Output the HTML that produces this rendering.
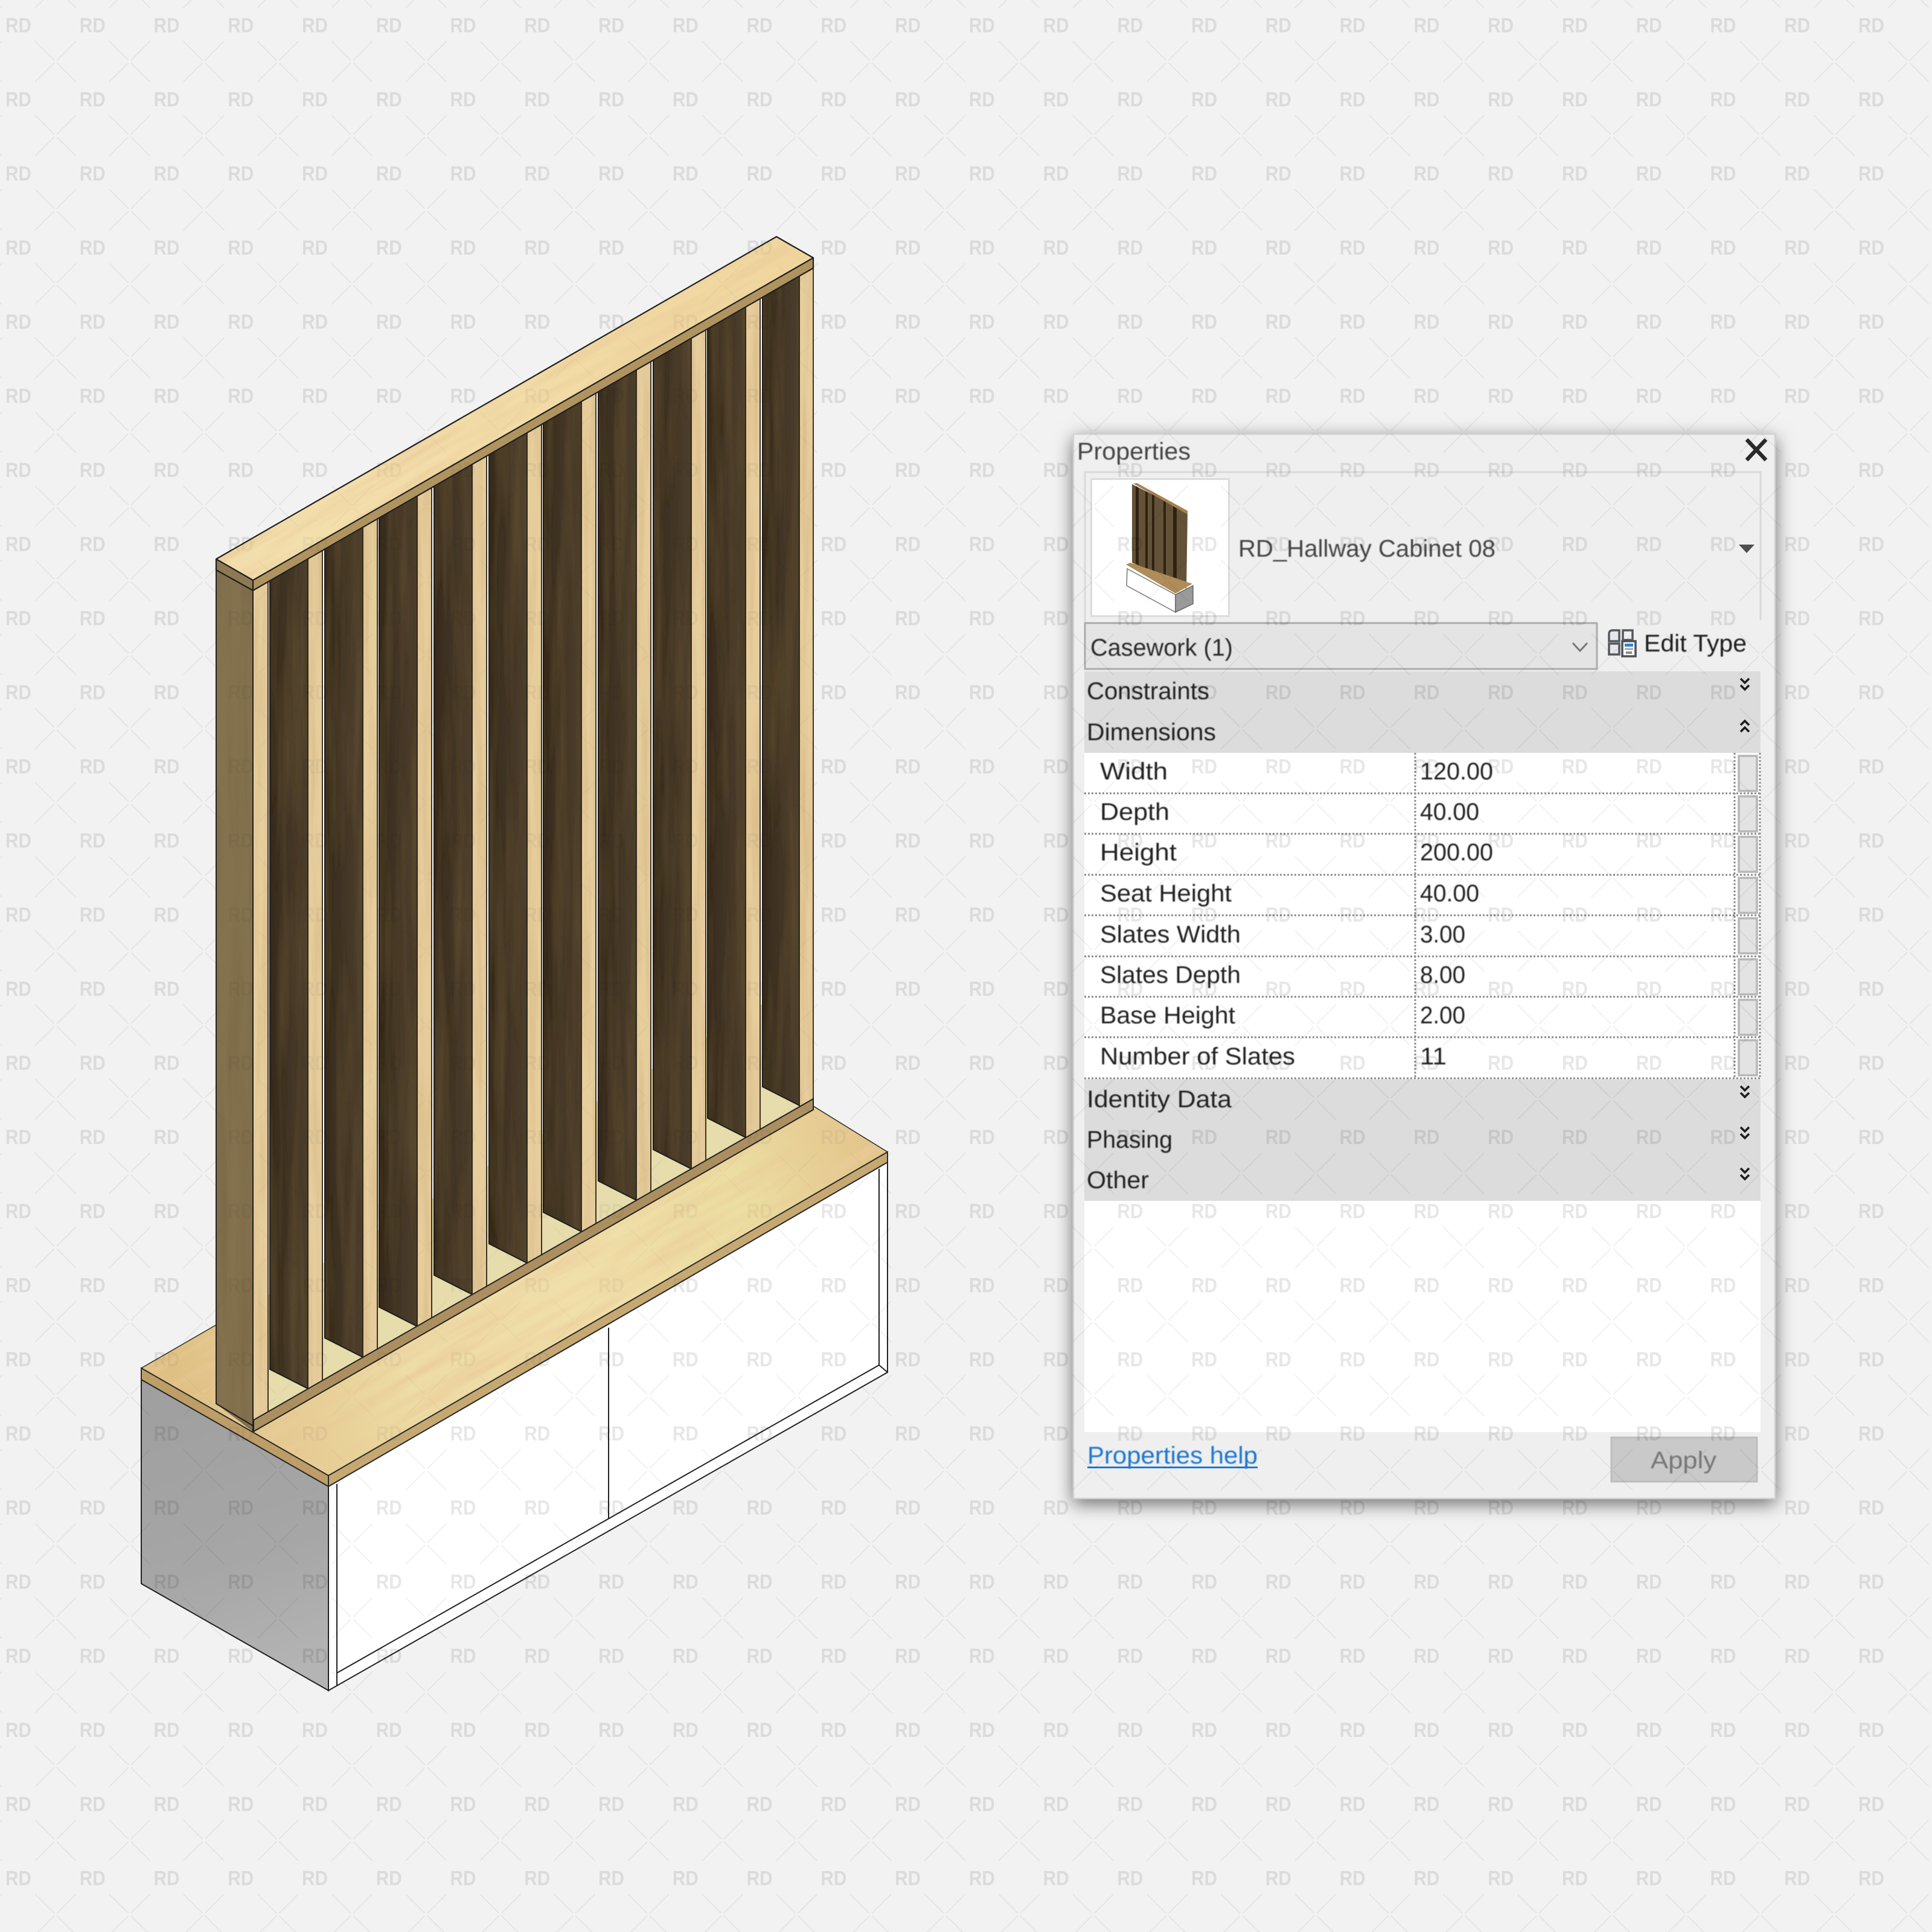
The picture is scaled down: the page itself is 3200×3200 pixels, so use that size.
<!DOCTYPE html>
<html><head><meta charset="utf-8"><title>Properties</title>
<style>html,body{margin:0;padding:0;background:#f2f2f2}svg{display:block}text{font-family:"Liberation Sans",sans-serif}</style></head>
<body>
<svg xmlns="http://www.w3.org/2000/svg" width="3200" height="3200" viewBox="0 0 3200 3200">
<defs>
<pattern id="wm" patternUnits="userSpaceOnUse" x="5" y="25" width="122.76" height="122.76">
  <text x="4" y="28.5" font-size="34" font-weight="700" textLength="43" lengthAdjust="spacingAndGlyphs" fill="#000" fill-opacity=".095" style="font-family:'Liberation Sans',sans-serif">RD</text>
  <path d="M53 43L85 75M89 79L121 111M121 43L89 75M85 79L53 111" stroke="#000" stroke-opacity=".065" stroke-width="1.6" fill="none"/>
</pattern>
<clipPath id="woodc">
  <polygon points="234,2266 357,2195 1347,1832 1470,1908 1470,1925 544,2462 234,2285"/>
  <polygon points="358,926 1286,392 1347,427 1347,1838 420,2371 358,2325"/>
</clipPath>
<clipPath id="panelc"><rect x="1777" y="718" width="1164" height="1766"/></clipPath>
<filter id="gh" x="0" y="0" width="1" height="1">
  <feTurbulence type="fractalNoise" baseFrequency="0.005 0.06" numOctaves="3" seed="4"/>
  <feColorMatrix values="0 0 0 0 .82  0 0 0 0 .6  0 0 0 0 .32  1.6 0 0 0 -.6"/>
  <feComposite in2="SourceAlpha" operator="in" result="g"/>
  <feMerge><feMergeNode in="SourceGraphic"/><feMergeNode in="g"/></feMerge>
</filter>
<filter id="gv" x="0" y="0" width="1" height="1">
  <feTurbulence type="fractalNoise" baseFrequency="0.05 0.003" numOctaves="3" seed="9"/>
  <feColorMatrix values="0 0 0 0 .15  0 0 0 0 .1  0 0 0 0 .04  .9 0 0 0 -.35"/>
  <feComposite in2="SourceAlpha" operator="in" result="g"/>
  <feMerge><feMergeNode in="SourceGraphic"/><feMergeNode in="g"/></feMerge>
</filter>
<filter id="gl" x="0" y="0" width="1" height="1">
  <feTurbulence type="fractalNoise" baseFrequency="0.08 0.004" numOctaves="3" seed="21"/>
  <feColorMatrix values="0 0 0 0 .62  0 0 0 0 .42  0 0 0 0 .18  1.1 0 0 0 -.42"/>
  <feComposite in2="SourceAlpha" operator="in" result="g"/>
  <feMerge><feMergeNode in="SourceGraphic"/><feMergeNode in="g"/></feMerge>
</filter>
<filter id="sh" x="-8%" y="-6%" width="116%" height="112%">
  <feDropShadow dx="0" dy="8" stdDeviation="15" flood-color="#000" flood-opacity=".55"/>
</filter>
<filter id="soft" x="-2%" y="-20%" width="104%" height="140%"><feGaussianBlur stdDeviation=".7"/></filter>
<linearGradient id="seat" gradientUnits="userSpaceOnUse" x1="300" y1="2300" x2="1450" y2="1900">
  <stop offset="0" stop-color="#dfc084"/><stop offset=".3" stop-color="#eedca6"/><stop offset=".55" stop-color="#f1dfaa"/><stop offset=".8" stop-color="#ecdea2"/><stop offset="1" stop-color="#e2c48a"/>
</linearGradient>
<linearGradient id="plank" gradientUnits="userSpaceOnUse" x1="358" y1="930" x2="1340" y2="420">
  <stop offset="0" stop-color="#f3e0ae"/><stop offset=".5" stop-color="#f3dca8"/><stop offset="1" stop-color="#f0d69e"/>
</linearGradient>
<linearGradient id="gray" gradientUnits="userSpaceOnUse" x1="234" y1="2300" x2="400" y2="2800">
  <stop offset="0" stop-color="#9f9f9f"/><stop offset=".6" stop-color="#a6a6a6"/><stop offset="1" stop-color="#b4b4b4"/>
</linearGradient>
<linearGradient id="dk" x1="0" y1="0" x2="1" y2="0">
  <stop offset="0" stop-color="#362a1c"/><stop offset=".5" stop-color="#423526"/><stop offset="1" stop-color="#4c3e2c"/>
</linearGradient>
</defs>

<rect width="3200" height="3200" fill="#f2f2f2"/>

<!-- Cabinet -->
<polygon points="234,2285 544,2462 544,2800 234,2623" fill="url(#gray)" stroke="#222" stroke-width="2"/>
<polygon points="544,2462 1470,1925 1470,2273 544,2800" fill="#fff" stroke="#222" stroke-width="2"/>
<path d="M558 2458V2771L1456 2261V1936M558 2771V2792M1456 2261L1470 2273M1008 2199V2515" fill="none" stroke="#222" stroke-width="2"/>

<rect width="3200" height="3200" fill="url(#wm)"/>

<!-- Seat -->
<g transform="rotate(-29.8 850 2100)"><g filter="url(#gh)"><g transform="rotate(29.8 850 2100)">
<polygon points="234,2266 357,2195 1347,1832 1470,1908 544,2444" fill="url(#seat)"/>
</g></g></g>
<polygon points="234,2266 357,2195 1347,1832 1470,1908 544,2444" fill="none" stroke="#2a2a2a" stroke-width="1.5"/>
<polygon points="234,2266 544,2444 544,2462 234,2285" fill="#bd9e68" stroke="#2a2a2a" stroke-width="2"/>
<polygon points="544,2444 1470,1908 1470,1925 544,2462" fill="#c6a972" stroke="#2a2a2a" stroke-width="2"/>

<!-- behind slats -->
<polygon points="444,964 1347,444 1347,1667 444,2146" fill="#fff"/>
<polygon points="444,2146 1347,1613 1347,1820 444,2338" fill="#e6dcac"/>

<!-- dark faces -->
<g filter="url(#gv)">
<polygon points="447,962 510,926 510,2300 447,2268" fill="url(#dk)"/>
<polygon points="538,910 601,873 601,2248 538,2216" fill="url(#dk)"/>
<polygon points="628,858 691,822 691,2197 628,2165" fill="url(#dk)"/>
<polygon points="719,805 782,769 782,2144 719,2112" fill="url(#dk)"/>
<polygon points="810,753 873,717 873,2092 810,2060" fill="url(#dk)"/>
<polygon points="900,701 963,665 963,2040 900,2008" fill="url(#dk)"/>
<polygon points="991,649 1054,613 1054,1988 991,1956" fill="url(#dk)"/>
<polygon points="1082,597 1145,560 1145,1936 1082,1904" fill="url(#dk)"/>
<polygon points="1172,545 1235,508 1235,1884 1172,1852" fill="url(#dk)"/>
<polygon points="1263,492 1326,456 1326,1832 1263,1800" fill="url(#dk)"/>
</g>
<g fill="none" stroke="#1c1c1c" stroke-width="2">
<path d="M447 962V2268L510 2300"/><path d="M538 910V2216L601 2248"/><path d="M628 858V2165L691 2197"/><path d="M719 805V2112L782 2144"/><path d="M810 753V2060L873 2092"/><path d="M900 701V2008L963 2040"/><path d="M991 649V1956L1054 1988"/><path d="M1082 597V1904L1145 1936"/><path d="M1172 545V1852L1235 1884"/><path d="M1263 492V1800L1326 1832"/>
</g>

<!-- light faces -->
<g filter="url(#gl)" fill="#e6cd9c">
<polygon points="419,978 444,964 444,2338 419,2352"/>
<polygon points="510,926 534,912 534,2287 510,2300"/>
<polygon points="601,873 625,860 625,2234 601,2248"/>
<polygon points="691,822 715,808 715,2183 691,2197"/>
<polygon points="782,769 806,755 806,2131 782,2144"/>
<polygon points="873,717 897,703 897,2078 873,2092"/>
<polygon points="963,665 987,651 987,2027 963,2040"/>
<polygon points="1054,613 1078,599 1078,1975 1054,1988"/>
<polygon points="1145,560 1169,546 1169,1922 1145,1936"/>
<polygon points="1235,508 1259,495 1259,1871 1235,1884"/>
<polygon points="1324,457 1347,444 1347,1820 1324,1833"/>
</g>
<path d="M444 964V2338M510 926V2300M534 912V2287M601 873V2248M625 860V2234M691 822V2197M715 808V2183M782 769V2144M806 755V2131M873 717V2092M897 703V2078M963 665V2040M987 651V2027M1054 613V1988M1078 599V1975M1145 560V1936M1169 546V1922M1235 508V1884M1259 495V1871M1324 457V1833M1347 444V1820" stroke="#2a2218" stroke-width="1.8" fill="none"/>

<!-- rail + left column -->
<polygon points="420,2352 1347,1820 1347,1838 420,2371" fill="#ab8f60" stroke="#222" stroke-width="2"/>
<polygon points="358,944 419,978 419,2371 358,2325" fill="#84724f" filter="url(#gv)"/>
<path d="M358 944V2325L420 2362V2371M419 978V2371" fill="none" stroke="#222" stroke-width="2"/>

<!-- top plank -->
<g transform="rotate(-29.8 850 680)"><g filter="url(#gh)"><g transform="rotate(29.8 850 680)">
<polygon points="358,926 1286,392 1347,427 419,961" fill="url(#plank)"/>
</g></g></g>
<polygon points="419,961 1347,427 1347,444 419,978" fill="#b09460"/>
<polygon points="358,926 419,961 419,978 358,944" fill="#8d7a55"/>
<path d="M358 926L1286 392L1347 427L419 961ZM419 961V978L1347 444V427M358 926V944L419 978" fill="none" stroke="#1f1f1f" stroke-width="2.2" stroke-linejoin="round"/>

<rect width="3200" height="3200" fill="url(#wm)" clip-path="url(#woodc)" opacity=".45"/>

<!-- Properties panel -->
<rect x="1777" y="718" width="1164" height="1765" fill="#efefef" filter="url(#sh)"/>
<rect x="1778" y="719" width="1162" height="1763" fill="none" stroke="#d2d2d2" stroke-width="2.5"/>
<path d="M1797 1030V782H2916V1027" fill="none" stroke="#d9d9d9" stroke-width="3"/>
<text x="1784" y="761" font-size="40" fill="#444" textLength="188" lengthAdjust="spacingAndGlyphs" filter="url(#soft)">Properties</text>
<path d="M2893 728L2925 762M2925 728L2893 762" stroke="#2a2a2a" stroke-width="6.5" fill="none"/>

<!-- preview -->
<rect x="1807.5" y="793.5" width="228" height="227" fill="#fff" stroke="#dcdcdc" stroke-width="3"/>
<polygon points="1875,802 1967,848 1965,975 1875,932" fill="#645238"/>
<g fill="#2e2312">
<polygon points="1881,805 1886,808 1886,936 1881,933"/>
<polygon points="1897,813 1901,816 1901,945 1897,942"/>
<polygon points="1908,818 1912,821 1912,950 1908,947"/>
<polygon points="1927,828 1931,831 1931,960 1927,957"/>
<polygon points="1943,836 1949,840 1949,968 1943,964"/>
</g>
<polygon points="1877,801 1883,800 1967,846 1967,852 1960,848" fill="#a8824e"/>
<polygon points="1865,935 1872,932 1975,967 1947,983" fill="#b08c58"/>
<polygon points="1867,942 1947,985 1947,1014 1866,970" fill="#fff" stroke="#777" stroke-width="1.5"/>
<polygon points="1947,985 1976,970 1976,1000 1947,1014" fill="#9a9a9a" stroke="#666" stroke-width="1.5"/>

<text x="2051" y="922" font-size="40" fill="#444" textLength="426" lengthAdjust="spacingAndGlyphs" filter="url(#soft)">RD_Hallway Cabinet 08</text>
<polygon points="2880,902 2906,902 2893,916" fill="#4f4f4f"/>

<!-- combobox -->
<rect x="1797" y="1032" width="848" height="76" fill="#e4e4e4" stroke="#ababab" stroke-width="3"/>
<text x="1806" y="1086" font-size="40" fill="#2a2a2a" textLength="236" lengthAdjust="spacingAndGlyphs" filter="url(#soft)">Casework (1)</text>
<path d="M2605 1065L2617 1078L2629 1065" fill="none" stroke="#777" stroke-width="3"/>
<!-- edit type icon -->
<g fill="#e4e6e8" stroke="#55585c" stroke-width="3.5">
<path d="M2665 1050Q2665 1044 2671 1044H2682V1062H2665Z"/>
<path d="M2688 1044H2704V1060H2688Z" fill="none"/>
<rect x="2665" y="1066" width="17" height="18"/>
</g>
<rect x="2687" y="1062" width="22" height="25" fill="#fff" stroke="#4c4f53" stroke-width="3.5"/>
<rect x="2691" y="1066" width="14" height="5" fill="#2e84d8"/>
<rect x="2691" y="1074" width="14" height="2" fill="#88898b"/>
<rect x="2693" y="1079" width="10" height="4" fill="#88898b"/>
<text x="2723" y="1079" font-size="40" fill="#1c1c1c" textLength="170" lengthAdjust="spacingAndGlyphs" filter="url(#soft)">Edit Type</text>

<!-- section headers -->
<rect x="1796" y="1112" width="1120" height="135" fill="#dcdcdc"/>
<text x="1800" y="1158" font-size="40" fill="#222" textLength="203" lengthAdjust="spacingAndGlyphs" filter="url(#soft)">Constraints</text>
<text x="1800" y="1226" font-size="40" fill="#222" textLength="214" lengthAdjust="spacingAndGlyphs" filter="url(#soft)">Dimensions</text>

<!-- rows -->
<rect x="1796" y="1247" width="1120" height="540" fill="#fff"/>
<g fill="#e3e3e3" stroke="#b7b7b7" stroke-width="3.5">
<rect x="2880" y="1252" width="30" height="58"/><rect x="2880" y="1319" width="30" height="58"/><rect x="2880" y="1386" width="30" height="58"/><rect x="2880" y="1454" width="30" height="58"/><rect x="2880" y="1521" width="30" height="58"/><rect x="2880" y="1589" width="30" height="58"/><rect x="2880" y="1656" width="30" height="58"/><rect x="2880" y="1723" width="30" height="58"/>
</g>
<path d="M1796 1314H2916M1796 1381H2916M1796 1449H2916M1796 1516H2916M1796 1584H2916M1796 1651H2916M1796 1718H2916M1796 1786H2916M2344 1247V1786M2873 1247V1786M2915 1247V1786" stroke="#8c8c8c" stroke-width="3" stroke-dasharray="3 3" fill="none"/>
<g font-size="40" fill="#222" filter="url(#soft)">
<text x="1822" y="1291" textLength="112" lengthAdjust="spacingAndGlyphs">Width</text>
<text x="1822" y="1358" textLength="115" lengthAdjust="spacingAndGlyphs">Depth</text>
<text x="1822" y="1425" textLength="127" lengthAdjust="spacingAndGlyphs">Height</text>
<text x="1822" y="1493" textLength="218" lengthAdjust="spacingAndGlyphs">Seat Height</text>
<text x="1822" y="1561" textLength="233" lengthAdjust="spacingAndGlyphs">Slates Width</text>
<text x="1822" y="1628" textLength="233" lengthAdjust="spacingAndGlyphs">Slates Depth</text>
<text x="1822" y="1695" textLength="224" lengthAdjust="spacingAndGlyphs">Base Height</text>
<text x="1822" y="1763" textLength="323" lengthAdjust="spacingAndGlyphs">Number of Slates</text>
<text x="2352" y="1291" textLength="121" lengthAdjust="spacingAndGlyphs">120.00</text>
<text x="2352" y="1358" textLength="98" lengthAdjust="spacingAndGlyphs">40.00</text>
<text x="2352" y="1425" textLength="121" lengthAdjust="spacingAndGlyphs">200.00</text>
<text x="2352" y="1493" textLength="98" lengthAdjust="spacingAndGlyphs">40.00</text>
<text x="2352" y="1561" textLength="75" lengthAdjust="spacingAndGlyphs">3.00</text>
<text x="2352" y="1628" textLength="75" lengthAdjust="spacingAndGlyphs">8.00</text>
<text x="2352" y="1695" textLength="75" lengthAdjust="spacingAndGlyphs">2.00</text>
<text x="2352" y="1763" textLength="44" lengthAdjust="spacingAndGlyphs">11</text>
</g>

<rect x="1796" y="1788" width="1120" height="201" fill="#dcdcdc"/>
<g font-size="40" fill="#222" filter="url(#soft)">
<text x="1800" y="1834" textLength="240" lengthAdjust="spacingAndGlyphs">Identity Data</text>
<text x="1800" y="1901" textLength="142" lengthAdjust="spacingAndGlyphs">Phasing</text>
<text x="1800" y="1968" textLength="103" lengthAdjust="spacingAndGlyphs">Other</text>
</g>

<!-- chevrons -->
<g fill="none" stroke="#1e1e1e" stroke-width="3.6">
<path d="M2883 1124L2890 1131L2897 1124M2883 1135L2890 1142L2897 1135"/>
<path d="M2883 1201L2890 1194L2897 1201M2883 1212L2890 1205L2897 1212"/>
<path d="M2883 1799L2890 1806L2897 1799M2883 1810L2890 1817L2897 1810"/>
<path d="M2883 1867L2890 1874L2897 1867M2883 1878L2890 1885L2897 1878"/>
<path d="M2883 1935L2890 1942L2897 1935M2883 1946L2890 1953L2897 1946"/>
</g>

<rect x="1796" y="1989" width="1120" height="383" fill="#fff"/>

<!-- footer -->
<text x="1801" y="2424" font-size="40" fill="#1f78d1" textLength="282" lengthAdjust="spacingAndGlyphs" filter="url(#soft)">Properties help</text>
<rect x="1801" y="2429" width="282" height="3" fill="#1f78d1"/>
<rect x="2669" y="2381" width="241" height="73" fill="#c9c9c9" stroke="#bdbdbd" stroke-width="3"/>
<text x="2734" y="2432" font-size="40" fill="#777" textLength="109" lengthAdjust="spacingAndGlyphs" filter="url(#soft)">Apply</text>

<!-- watermark over panel -->
<rect width="3200" height="3200" fill="url(#wm)" clip-path="url(#panelc)"/>
</svg>
</body></html>
